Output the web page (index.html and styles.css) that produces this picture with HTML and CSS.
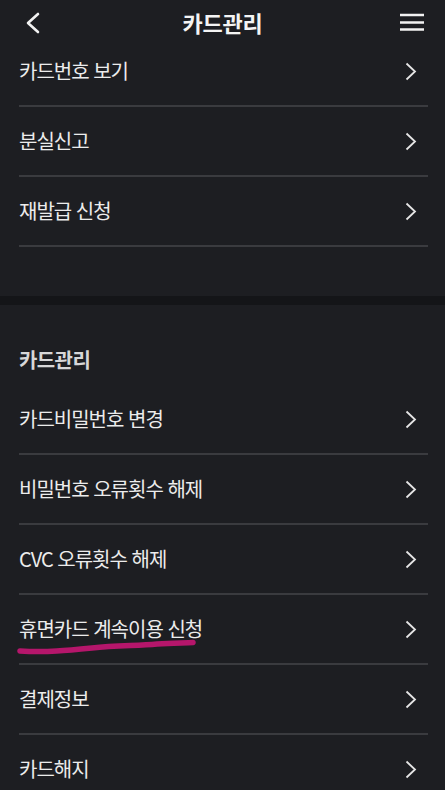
FILE: index.html
```html
<!DOCTYPE html>
<html lang="ko">
<head>
<meta charset="utf-8">
<link rel="stylesheet" href="styles.css">
</head>
<body>
<div class="app">
  <header class="topbar">
    <svg class="back" width="16" height="22" viewBox="0 0 16 22"><path d="M13 2 L3 11 L13 20" fill="none" stroke="#f2f2f2" stroke-width="2.6" stroke-linecap="round" stroke-linejoin="round"/></svg>
    <h1 class="title">카드관리</h1>
    <svg class="menu" width="24" height="18" viewBox="0 0 24 18"><path d="M0 2 H24 M0 9.5 H24 M0 16.5 H24" stroke="#f2f2f2" stroke-width="2.4"/></svg>
  </header>
  <ul class="list">
    <li class="row"><span>카드번호 보기</span><svg class="chev" width="12" height="19" viewBox="0 0 12 19"><path d="M1.5 1.5 L10 9.5 L1.5 17.5" fill="none" stroke="#e6e6e6" stroke-width="1.8"/></svg></li>
    <li class="row"><span>분실신고</span><svg class="chev" width="12" height="19" viewBox="0 0 12 19"><path d="M1.5 1.5 L10 9.5 L1.5 17.5" fill="none" stroke="#e6e6e6" stroke-width="1.8"/></svg></li>
    <li class="row"><span>재발급 신청</span><svg class="chev" width="12" height="19" viewBox="0 0 12 19"><path d="M1.5 1.5 L10 9.5 L1.5 17.5" fill="none" stroke="#e6e6e6" stroke-width="1.8"/></svg></li>
  </ul>
  <div class="spacer"></div>
  <div class="band"></div>
  <h2 class="section">카드관리</h2>
  <ul class="list">
    <li class="row"><span>카드비밀번호 변경</span><svg class="chev" width="12" height="19" viewBox="0 0 12 19"><path d="M1.5 1.5 L10 9.5 L1.5 17.5" fill="none" stroke="#e6e6e6" stroke-width="1.8"/></svg></li>
    <li class="row"><span>비밀번호 오류횟수 해제</span><svg class="chev" width="12" height="19" viewBox="0 0 12 19"><path d="M1.5 1.5 L10 9.5 L1.5 17.5" fill="none" stroke="#e6e6e6" stroke-width="1.8"/></svg></li>
    <li class="row"><span>CVC 오류횟수 해제</span><svg class="chev" width="12" height="19" viewBox="0 0 12 19"><path d="M1.5 1.5 L10 9.5 L1.5 17.5" fill="none" stroke="#e6e6e6" stroke-width="1.8"/></svg></li>
    <li class="row marked"><span>휴면카드 계속이용 신청</span><svg class="chev" width="12" height="19" viewBox="0 0 12 19"><path d="M1.5 1.5 L10 9.5 L1.5 17.5" fill="none" stroke="#e6e6e6" stroke-width="1.8"/></svg>
      <svg class="scribble" width="182" height="18" viewBox="0 0 182 18"><path d="M3 14 C 30 15.5, 50 13.5, 75 11 C 100 8, 120 9, 140 7 C 155 6, 166 6, 176 5.5" fill="none" stroke="#b5166b" stroke-width="5.5" stroke-linecap="round"/></svg>
    </li>
    <li class="row"><span>결제정보</span><svg class="chev" width="12" height="19" viewBox="0 0 12 19"><path d="M1.5 1.5 L10 9.5 L1.5 17.5" fill="none" stroke="#e6e6e6" stroke-width="1.8"/></svg></li>
    <li class="row"><span>카드해지</span><svg class="chev" width="12" height="19" viewBox="0 0 12 19"><path d="M1.5 1.5 L10 9.5 L1.5 17.5" fill="none" stroke="#e6e6e6" stroke-width="1.8"/></svg></li>
  </ul>
</div>
</body>
</html>
```
FILE: styles.css
```css
* { box-sizing: border-box; }
html, body { margin: 0; padding: 0; background: #1d1e22; }
body {
  font-family: "Noto Sans CJK KR", "Noto Sans", sans-serif;
  color: #ececec;
  overflow: hidden;
}
.app { width: 445px; height: 790px; overflow: hidden; }
.topbar {
  height: 37px;
  display: flex;
  align-items: center;
  justify-content: space-between;
  padding: 0 21px 0 25px;
}
.back { display: block; margin-top: 9px; }
.menu { display: block; margin-top: 6px; }
.title {
  margin: 0;
  font-size: 22px;
  font-weight: 700;
  color: #f4f4f4;
  letter-spacing: -0.3px;
  line-height: 1;
  margin-left: 4px;
  margin-top: 6px;
}
.list { list-style: none; margin: 0; padding: 0 17px 0 19px; }
.row {
  position: relative;
  height: 70px;
  display: flex;
  align-items: center;
  justify-content: space-between;
  border-bottom: 2px solid #3a3b3f;
  font-size: 20px;
  letter-spacing: -1px;
  padding-right: 11px;
  padding-top: 0;
}
.row span { line-height: 1; }
.chev { display: block; }
.spacer { height: 49px; }
.band { height: 9px; background: #141518; }
.section {
  margin: 0;
  height: 80px;
  display: flex;
  align-items: center;
  padding: 30px 19px 0;
  font-size: 20px;
  font-weight: 700;
  color: #d7d7d8;
  letter-spacing: -0.6px;
  line-height: 1;
}
.scribble { position: absolute; left: -2px; top: 42px; }
```
